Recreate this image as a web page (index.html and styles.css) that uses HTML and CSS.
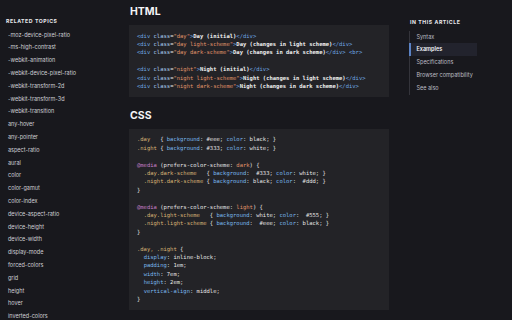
FILE: index.html
```html
<!DOCTYPE html>
<html lang="en">
<head>
<meta charset="utf-8">
<title>prefers-color-scheme</title>
<link rel="stylesheet" href="styles.css">
</head>
<body>
<div class="page">
  <aside class="related">
    <h4 class="side-title">Related Topics</h4>
    <ul class="related-list">
      <li>-moz-device-pixel-ratio</li>
      <li>-ms-high-contrast</li>
      <li>-webkit-animation</li>
      <li>-webkit-device-pixel-ratio</li>
      <li>-webkit-transform-2d</li>
      <li>-webkit-transform-3d</li>
      <li>-webkit-transition</li>
      <li>any-hover</li>
      <li>any-pointer</li>
      <li>aspect-ratio</li>
      <li>aural</li>
      <li>color</li>
      <li>color-gamut</li>
      <li>color-index</li>
      <li>device-aspect-ratio</li>
      <li>device-height</li>
      <li>device-width</li>
      <li>display-mode</li>
      <li>forced-colors</li>
      <li>grid</li>
      <li>height</li>
      <li>hover</li>
      <li>inverted-colors</li>
    </ul>
  </aside>

  <main class="content">
    <section class="section">
      <h2 class="section-title">HTML</h2>
      <pre class="code"><span class="t">&lt;div</span> <span class="a">class</span>=<span class="v">"day"</span><span class="t">&gt;</span><span class="x">Day (initial)</span><span class="t">&lt;/div&gt;</span>
<span class="t">&lt;div</span> <span class="a">class</span>=<span class="v">"day light-scheme"</span><span class="t">&gt;</span><span class="x">Day (changes in light scheme)</span><span class="t">&lt;/div&gt;</span>
<span class="t">&lt;div</span> <span class="a">class</span>=<span class="v">"day dark-scheme"</span><span class="t">&gt;</span><span class="x">Day (changes in dark scheme)</span><span class="t">&lt;/div&gt;</span> <span class="t">&lt;br&gt;</span>

<span class="t">&lt;div</span> <span class="a">class</span>=<span class="v">"night"</span><span class="t">&gt;</span><span class="x">Night (initial)</span><span class="t">&lt;/div&gt;</span>
<span class="t">&lt;div</span> <span class="a">class</span>=<span class="v">"night light-scheme"</span><span class="t">&gt;</span><span class="x">Night (changes in light scheme)</span><span class="t">&lt;/div&gt;</span>
<span class="t">&lt;div</span> <span class="a">class</span>=<span class="v">"night dark-scheme"</span><span class="t">&gt;</span><span class="x">Night (changes in dark scheme)</span><span class="t">&lt;/div&gt;</span></pre>
    </section>

    <section class="section section-css">
      <h2 class="section-title">CSS</h2>
      <pre class="code"><span class="s">.day</span>   { <span class="p">background</span>: #eee; <span class="p">color</span>: black; }
<span class="s">.night</span> { <span class="p">background</span>: #333; <span class="p">color</span>: white; }

<span class="m">@media</span> (prefers-color-scheme: <span class="v">dark</span>) {
  <span class="s">.day.dark-scheme</span>   { <span class="p">background</span>:  #333; <span class="p">color</span>: white; }
  <span class="s">.night.dark-scheme</span> { <span class="p">background</span>: black; <span class="p">color</span>:  #ddd; }
}

<span class="m">@media</span> (prefers-color-scheme: <span class="v">light</span>) {
  <span class="s">.day.light-scheme</span>   { <span class="p">background</span>: white; <span class="p">color</span>:  #555; }
  <span class="s">.night.light-scheme</span> { <span class="p">background</span>:  #eee; <span class="p">color</span>: black; }
}

<span class="s">.day, .night</span> {
  <span class="p">display</span>: inline-block;
  <span class="p">padding</span>: 1em;
  <span class="p">width</span>: 7em;
  <span class="p">height</span>: 2em;
  <span class="p">vertical-align</span>: middle;
}</pre>
    </section>
  </main>

  <aside class="toc">
    <h4 class="side-title toc-title">In this article</h4>
    <ul class="toc-list">
      <li class="toc-item">Syntax</li>
      <li class="toc-item active">Examples</li>
      <li class="toc-item">Specifications</li>
      <li class="toc-item">Browser compatibility</li>
      <li class="toc-item">See also</li>
    </ul>
  </aside>
</div>
</body>
</html>
```

FILE: styles.css
```css
html, body {
  margin: 0;
  padding: 0;
  background: #18181d;
  height: 100%;
  overflow: hidden;
}

body {
  font-family: Inter, "Noto Sans", sans-serif;
  color: #d6d6db;
}

.page {
  display: flex;
  align-items: flex-start;
}

ul {
  list-style: none;
  margin: 0;
  padding: 0;
}

.side-title {
  margin: 0;
  font-size: 5.2px;
  line-height: 8px;
  font-weight: 700;
  letter-spacing: 0.55px;
  text-transform: uppercase;
  color: #e8e8ec;
}

/* left sidebar */
.related {
  width: 123px;
  padding: 17px 0 0 6px;
  flex: none;
}

.related-list {
  margin-top: 3.6px;
  padding-left: 2px;
}

.related-list li {
  font-size: 5.5px;
  line-height: 12.8px;
  color: #cfcfd5;
  white-space: nowrap;
}

/* main content */
.content {
  width: 260px;
  flex: none;
  padding-top: 6px;
}

.section-title {
  margin: 0 0 7px 1px;
  font-size: 10.5px;
  line-height: 12px;
  font-weight: 700;
  color: #f4f4f6;
}

.section-css {
  margin-top: 13px;
}

.code {
  margin: 0;
  background: #232327;
  padding: 6.5px 8px;
  font-family: "DejaVu Sans Mono", "Liberation Mono", monospace;
  font-size: 5.5px;
  line-height: 8.4px;
  color: #e6e6e6;
  white-space: pre;
  overflow: hidden;
}

.code .t { color: #6ea6e0; }
.code .a { color: #a8cdf0; }
.code .v { color: #e0946a; }
.code .x { color: #f2f2f2; font-weight: 700; }
.code .s { color: #d8b476; }
.code .p { color: #7ab8ec; }
.code .m { color: #c57fc6; }

/* right sidebar */
.toc {
  margin-left: 20px;
  width: 68px;
  flex: none;
  padding-top: 18px;
}

.toc-title {
  padding-left: 1px;
}

.toc-list {
  margin-top: 4.5px;
  border-left: 1px solid #34343b;
}

.toc-item {
  font-size: 5.5px;
  line-height: 12.9px;
  padding-left: 6.5px;
  color: #bdbdc4;
  white-space: nowrap;
}

.toc-item.active {
  position: relative;
  background: #22232d;
  color: #f4f4f8;
  font-weight: 600;
}

.toc-item.active::before {
  content: "";
  position: absolute;
  left: -1px;
  top: 0;
  bottom: 0;
  width: 2px;
  background: #5b82c4;
}
```
